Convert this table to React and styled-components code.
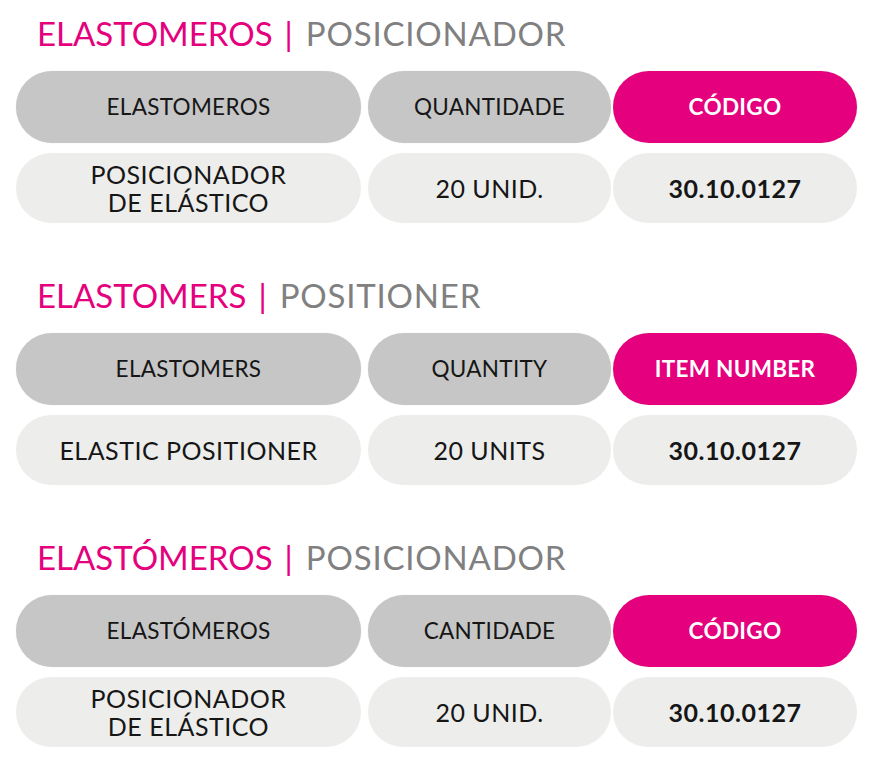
import React from 'react';
import styled, { createGlobalStyle } from 'styled-components';

const GlobalStyle = createGlobalStyle`
  html, body {
    margin: 0;
    padding: 0;
    background: #ffffff;
  }
  body {
    font-family: 'Lato', 'Noto Sans', sans-serif;
  }
`;

const Page = styled.div`
  width: 875px;
  padding: 13px 16px 0;
  box-sizing: border-box;
  display: flex;
  flex-direction: column;
  gap: 52px;
`;

const Section = styled.section`
  display: flex;
  flex-direction: column;
  gap: 18px;
`;

const Title = styled.h2`
  margin: 0;
  padding-left: 21px;
  height: 40px;
  line-height: 40px;
  font-size: 33px;
  font-weight: 400;
  color: #808080;
  white-space: nowrap;
`;

const Accent = styled.span`
  color: #e5007e;
`;

const Pipe = styled.span`
  color: #e5007e;
  margin: 0 13px 0 12px;
`;

const Sub = styled.span`
  letter-spacing: 0.8px;
`;

const Table = styled.div`
  display: grid;
  grid-template-columns: 352px 245px 244px;
  grid-template-rows: 72px 70px;
  row-gap: 10px;
`;

const Cell = styled.div`
  width: ${props => props.$w}px;
  display: flex;
  align-items: center;
  justify-content: center;
  text-align: center;
  border-radius: 36px;
  box-sizing: border-box;
  text-transform: uppercase;
  background: ${props =>
    props.$kind === 'key' ? '#e5007e' : props.$kind === 'head' ? '#c6c6c6' : '#ededec'};
  color: ${props => (props.$kind === 'key' ? '#ffffff' : '#161616')};
  font-size: ${props => (props.$kind === 'body' ? 25 : 22.5)}px;
  letter-spacing: ${props => (props.$kind === 'body' ? 0.5 : 0.3)}px;
  font-weight: ${props => (props.$bold ? 700 : 400)};
  line-height: 28px;
  box-shadow: ${props => (props.$kind === 'body' ? 'none' : '0 0 1px rgba(0, 0, 0, 0.18)')};
`;

const widths = [345, 243, 244];

const sections = [
  {
    title: 'ELASTOMEROS',
    sub: 'POSICIONADOR',
    head: ['ELASTOMEROS', 'QUANTIDADE', 'CÓDIGO'],
    body: [['POSICIONADOR', 'DE ELÁSTICO'], '20 UNID.', '30.10.0127'],
  },
  {
    title: 'ELASTOMERS',
    sub: 'POSITIONER',
    head: ['ELASTOMERS', 'QUANTITY', 'ITEM NUMBER'],
    body: [['ELASTIC POSITIONER'], '20 UNITS', '30.10.0127'],
  },
  {
    title: 'ELASTÓMEROS',
    sub: 'POSICIONADOR',
    head: ['ELASTÓMEROS', 'CANTIDADE', 'CÓDIGO'],
    body: [['POSICIONADOR', 'DE ELÁSTICO'], '20 UNID.', '30.10.0127'],
  },
];

function ProductTable({ head, body }) {
  return (
    <Table>
      {head.map((label, i) => (
        <Cell key={label} $w={widths[i]} $kind={i === 2 ? 'key' : 'head'} $bold={i === 2}>
          {label}
        </Cell>
      ))}
      <Cell $w={widths[0]} $kind="body">
        <div>
          {body[0].map(line => (
            <div key={line}>{line}</div>
          ))}
        </div>
      </Cell>
      <Cell $w={widths[1]} $kind="body">{body[1]}</Cell>
      <Cell $w={widths[2]} $kind="body" $bold>{body[2]}</Cell>
    </Table>
  );
}

export default function App() {
  return (
    <>
      <GlobalStyle />
      <Page>
        {sections.map(s => (
          <Section key={s.head[0]}>
            <Title>
              <Accent>{s.title}</Accent>
              <Pipe>|</Pipe>
              <Sub>{s.sub}</Sub>
            </Title>
            <ProductTable head={s.head} body={s.body} />
          </Section>
        ))}
      </Page>
    </>
  );
}
